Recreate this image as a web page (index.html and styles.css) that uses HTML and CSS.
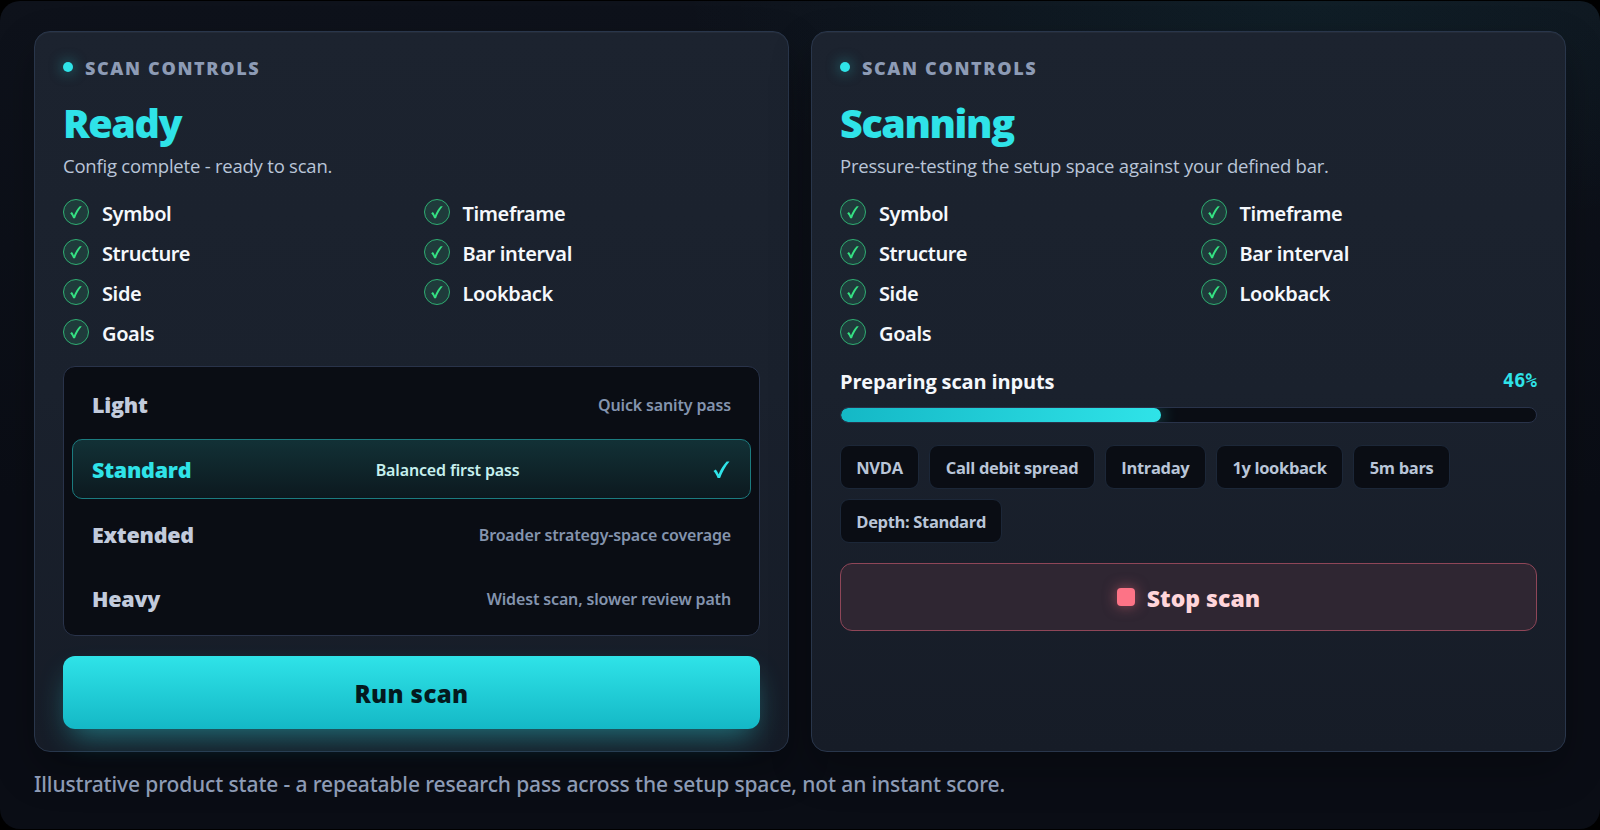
FILE: index.html
```html
<!DOCTYPE html>
<html lang="en">
<head>
    <meta charset="UTF-8">
    <meta name="viewport" content="width=device-width, initial-scale=1.0">
    <title>Scan Controls</title>
    <link rel="stylesheet" href="styles.css">
</head>
<body>
    <!-- Shared check mark -->
    <svg class="sprite" width="0" height="0">
        <symbol id="check" viewBox="0 0 12 13">
            <path d="M0.2 7.2 L1.9 6.1 C2.8 7.1 3.4 8.2 3.9 9.5 C5.3 6 7.2 3 9.7 0.3 L11.8 0.3 C8.8 3.9 6.5 7.9 5 12.3 L3.2 12.3 C2.4 10.3 1.5 8.6 0.2 7.2 Z"/>
        </symbol>
    </svg>

    <main class="panel">
        <div class="cards">
            <section class="card">
                <div class="eyebrow"><span class="dot"></span>Scan controls</div>
                <h2>Ready</h2>
                <p class="subtitle">Config complete - ready to scan.</p>
                <ul class="checklist">
                    <li><span class="tick"><svg><use href="#check"/></svg></span><span class="label">Symbol</span></li>
                    <li><span class="tick"><svg><use href="#check"/></svg></span><span class="label">Timeframe</span></li>
                    <li><span class="tick"><svg><use href="#check"/></svg></span><span class="label">Structure</span></li>
                    <li><span class="tick"><svg><use href="#check"/></svg></span><span class="label">Bar interval</span></li>
                    <li><span class="tick"><svg><use href="#check"/></svg></span><span class="label">Side</span></li>
                    <li><span class="tick"><svg><use href="#check"/></svg></span><span class="label">Lookback</span></li>
                    <li><span class="tick"><svg><use href="#check"/></svg></span><span class="label">Goals</span></li>
                </ul>
                <div class="depths">
                    <div class="depth">
                        <strong>Light</strong>
                        <span>Quick sanity pass</span>
                    </div>
                    <div class="depth selected">
                        <strong>Standard</strong>
                        <span>Balanced first pass</span>
                        <svg class="depth-check"><use href="#check"/></svg>
                    </div>
                    <div class="depth">
                        <strong>Extended</strong>
                        <span>Broader strategy-space coverage</span>
                    </div>
                    <div class="depth">
                        <strong>Heavy</strong>
                        <span>Widest scan, slower review path</span>
                    </div>
                </div>
                <button class="run-button" type="button">Run scan</button>
            </section>

            <section class="card">
                <div class="eyebrow"><span class="dot"></span>Scan controls</div>
                <h2>Scanning</h2>
                <p class="subtitle">Pressure-testing the setup space against your defined bar.</p>
                <ul class="checklist">
                    <li><span class="tick"><svg><use href="#check"/></svg></span><span class="label">Symbol</span></li>
                    <li><span class="tick"><svg><use href="#check"/></svg></span><span class="label">Timeframe</span></li>
                    <li><span class="tick"><svg><use href="#check"/></svg></span><span class="label">Structure</span></li>
                    <li><span class="tick"><svg><use href="#check"/></svg></span><span class="label">Bar interval</span></li>
                    <li><span class="tick"><svg><use href="#check"/></svg></span><span class="label">Side</span></li>
                    <li><span class="tick"><svg><use href="#check"/></svg></span><span class="label">Lookback</span></li>
                    <li><span class="tick"><svg><use href="#check"/></svg></span><span class="label">Goals</span></li>
                </ul>
                <div class="progress-head">
                    <strong>Preparing scan inputs</strong>
                    <span class="percent">46%</span>
                </div>
                <div class="progress"><div class="progress-fill" style="width: 46%"></div></div>
                <div class="chips">
                    <span class="chip">NVDA</span>
                    <span class="chip">Call debit spread</span>
                    <span class="chip">Intraday</span>
                    <span class="chip">1y lookback</span>
                    <span class="chip">5m bars</span>
                    <span class="chip">Depth: Standard</span>
                </div>
                <button class="stop-button" type="button"><span class="stop-icon"></span><span class="stop-text">Stop scan</span></button>
            </section>
        </div>
        <p class="footnote">Illustrative product state - a repeatable research pass across the setup space, not an instant score.</p>
    </main>
</body>
</html>
```
FILE: styles.css
```css
* {
    box-sizing: border-box;
}
body {
    margin: 0;
    padding: 1px 0;
    height: 830px;
    overflow: hidden;
    background: #000;
    color: #f5f8fc;
    font-family: "Open Sans", "Noto Sans", sans-serif;
}
h2, p, ul {
    margin: 0;
    padding: 0;
}
.sprite {
    display: block;
}
.panel {
    height: 828px;
    padding: 30px 34px 0;
    border-radius: 20px;
    background:
        radial-gradient(ellipse 640px 240px at 82% 0, rgba(47, 227, 232, 0.06), transparent),
        linear-gradient(180deg, #0e121b, #0a0d15 60%);
}
.cards {
    display: grid;
    grid-template-columns: 1fr 1fr;
    gap: 22px;
    height: 721px;
}
.card {
    padding: 28px 28px 20px;
    border: 1px solid #29364b;
    border-radius: 16px;
    background: linear-gradient(180deg, #1c232f, #1a212d 50%, #161c27);
    box-shadow: 0 18px 40px rgba(0, 0, 0, 0.28), inset 0 1px 0 rgba(255, 255, 255, 0.04);
}
.eyebrow {
    display: flex;
    align-items: center;
    gap: 12px;
    height: 16px;
    color: #8d9bb5;
    font-size: 18px;
    font-weight: 800;
    letter-spacing: 1.65px;
    text-transform: uppercase;
}
.dot {
    width: 10px;
    height: 10px;
    margin-bottom: 2px;
    border-radius: 50%;
    background: #2fe3e8;
    box-shadow: 0 0 14px rgba(47, 227, 232, 0.55);
}
h2 {
    margin-top: 25px;
    color: #2fe3e8;
    font-size: 39.5px;
    font-weight: 800;
    line-height: 44px;
    letter-spacing: -1.4px;
}
.subtitle {
    margin-top: 9px;
    color: #b9c5d8;
    font-size: 18.5px;
    line-height: 24px;
    letter-spacing: -0.22px;
}
.checklist {
    display: grid;
    grid-template-columns: 1fr 1fr;
    gap: 14px 24px;
    margin-top: 21px;
    list-style: none;
}
.checklist li {
    display: flex;
    gap: 13px;
    height: 26px;
}
.label {
    padding-top: 2px;
    font-family: "Noto Sans", sans-serif;
    font-size: 20px;
    font-weight: 600;
    line-height: 26px;
    letter-spacing: -0.38px;
}
.tick {
    display: flex;
    align-items: center;
    justify-content: center;
    width: 26px;
    height: 26px;
    border: 1px solid #2fae72;
    border-radius: 50%;
    background: #1f3b3b;
}
.tick svg {
    width: 12px;
    height: 13px;
    fill: #35e082;
}
.depths {
    display: grid;
    grid-template-rows: 59px 60px 59px 59px;
    gap: 5px;
    height: 270px;
    margin-top: 21px;
    padding: 8px;
    border: 1px solid #29334a;
    border-radius: 12px;
    background: #0a0d14;
}
.depth {
    display: flex;
    align-items: center;
    justify-content: space-between;
    padding: 0 19px;
    border: 1px solid transparent;
    border-radius: 10px;
    color: #8494ae;
}
.depth strong {
    color: #c2cbdc;
    font-size: 21.5px;
    font-weight: 800;
    letter-spacing: -0.25px;
}
.depth span {
    font-family: "Noto Sans", sans-serif;
    font-size: 16px;
    font-weight: 600;
    letter-spacing: -0.15px;
}
.depth.selected {
    padding-top: 1px;
    border-color: #1b7b7f;
    background: linear-gradient(180deg, #123136, #0c191f);
    color: #c6f0ee;
}
.depth.selected strong {
    color: #2fe3e8;
}
.depth.selected ~ .depth {
    padding-top: 2px;
}
.depth-check {
    width: 17px;
    height: 18px;
    margin: 1px 1px 0 9px;
    fill: #2fe3e8;
}
button {
    display: flex;
    align-items: center;
    justify-content: center;
    width: 100%;
    border-radius: 12px;
    font-family: inherit;
    font-size: 24px;
    font-weight: 800;
    letter-spacing: 0.4px;
}
.run-button {
    height: 73px;
    margin-top: 20px;
    padding: 1px 0 0;
    border: none;
    background: linear-gradient(180deg, #2fe3e8, #14b8c6);
    box-shadow: 0 14px 30px -8px rgba(47, 227, 232, 0.45);
    color: #041a1e;
}
.progress-head {
    display: flex;
    align-items: center;
    justify-content: space-between;
    height: 30px;
    margin-top: 21px;
}
.progress-head strong {
    font-size: 20px;
    font-weight: 700;
    letter-spacing: -0.14px;
}
.percent {
    margin-bottom: 2px;
    color: #2fe3e8;
    font: bold 19px "DejaVu Sans Mono", monospace;
}
.progress {
    height: 16px;
    margin-top: 11px;
    border: 1px solid #29334a;
    border-radius: 8px;
    background: #0a0d14;
    overflow: hidden;
}
.progress-fill {
    height: 100%;
    border-radius: 8px;
    background: linear-gradient(90deg, #14b8c6, #2fe3e8);
    box-shadow: 0 0 18px rgba(47, 227, 232, 0.45);
}
.chips {
    display: flex;
    flex-wrap: wrap;
    gap: 10.5px;
    margin-top: 22px;
}
.chip {
    height: 43.5px;
    padding: 1px 15.3px 0;
    border: 1px solid #1c2738;
    border-radius: 9px;
    background: #0a0d14;
    color: #b9c5d8;
    font-size: 16.5px;
    font-weight: 700;
    line-height: 41px;
    letter-spacing: -0.34px;
}
.stop-button {
    gap: 12px;
    height: 68px;
    margin-top: 20.5px;
    padding: 0;
    border: 1px solid #8f4658;
    background: #2f2632;
    color: #ffd5da;
}
.stop-text {
    padding-top: 1px;
    font-size: 23px;
    letter-spacing: 0;
}
.stop-icon {
    width: 18px;
    height: 18px;
    border-radius: 4px;
    background: #fd7386;
    box-shadow: 0 0 14px rgba(253, 115, 134, 0.5);
}
.footnote {
    margin-top: 17px;
    color: #8d9bb5;
    font-family: "Noto Sans", sans-serif;
    font-size: 21px;
    font-weight: 500;
    line-height: 30px;
    letter-spacing: -0.13px;
}
```
